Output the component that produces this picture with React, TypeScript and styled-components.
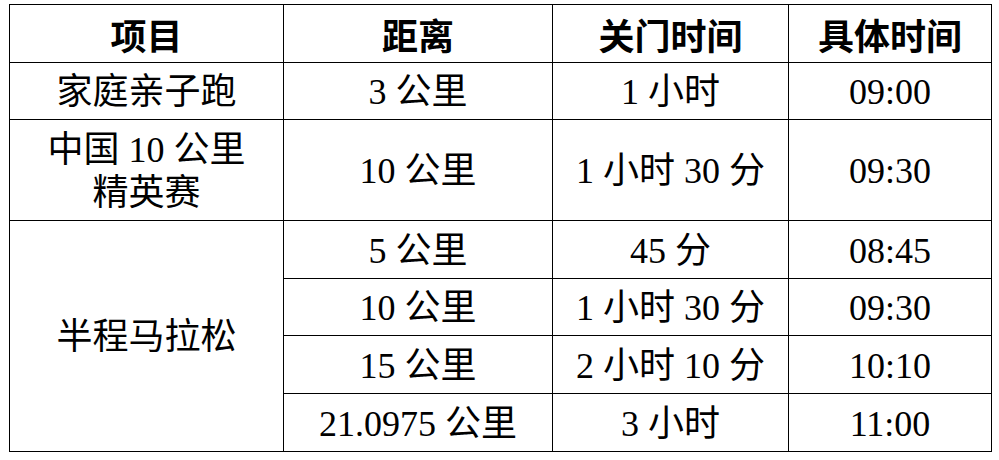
import styled, { createGlobalStyle } from "styled-components";

const GlobalStyle = createGlobalStyle`
  html, body {
    margin: 0;
    padding: 0;
    background: #ffffff;
  }
`;

const Page = styled.div`
  padding: 4px 0 0 9px;
`;

const Table = styled.table`
  border-collapse: collapse;
  table-layout: fixed;
  width: 982px;
  font-family: "Times New Roman", "Liberation Serif", Tinos, "Noto Sans CJK SC", serif;
  font-size: 36px;
  color: #000;
`;

const Row = styled.tr<{ $h: number }>`
  height: ${(p) => p.$h}px;
`;

const Head = styled.th`
  border: 1px solid #000;
  padding: 0;
  text-align: center;
  vertical-align: middle;
  font-family: "Noto Sans CJK SC", sans-serif;
  font-weight: 700;
  line-height: 1;
`;

const Cell = styled.td`
  border: 1px solid #000;
  padding: 3px 0 0;
  text-align: center;
  vertical-align: middle;
  line-height: 43px;
`;

interface RaceRow {
  dist: string;
  close: string;
  start: string;
  h: number;
}

const half: RaceRow[] = [
  { dist: "5 公里", close: "45 分", start: "08:45", h: 58 },
  { dist: "10 公里", close: "1 小时 30 分", start: "09:30", h: 57 },
  { dist: "15 公里", close: "2 小时 10 分", start: "10:10", h: 58 },
  { dist: "21.0975 公里", close: "3 小时", start: "11:00", h: 58 },
];

export default function App() {
  return (
    <>
      <GlobalStyle />
      <Page>
        <Table>
          <colgroup>
            <col style={{ width: 274 }} />
            <col style={{ width: 269 }} />
            <col style={{ width: 236 }} />
            <col style={{ width: 203 }} />
          </colgroup>
          <thead>
            <Row $h={58}>
              <Head>项目</Head>
              <Head>距离</Head>
              <Head>关门时间</Head>
              <Head>具体时间</Head>
            </Row>
          </thead>
          <tbody>
            <Row $h={57}>
              <Cell>家庭亲子跑</Cell>
              <Cell>3 公里</Cell>
              <Cell>1 小时</Cell>
              <Cell>09:00</Cell>
            </Row>
            <Row $h={101}>
              <Cell>
                中国 10 公里
                <br />
                精英赛
              </Cell>
              <Cell>10 公里</Cell>
              <Cell>1 小时 30 分</Cell>
              <Cell>09:30</Cell>
            </Row>
            {half.map((r, i) => (
              <Row $h={r.h} key={r.dist}>
                {i === 0 && <Cell rowSpan={half.length}>半程马拉松</Cell>}
                <Cell>{r.dist}</Cell>
                <Cell>{r.close}</Cell>
                <Cell>{r.start}</Cell>
              </Row>
            ))}
          </tbody>
        </Table>
      </Page>
    </>
  );
}
